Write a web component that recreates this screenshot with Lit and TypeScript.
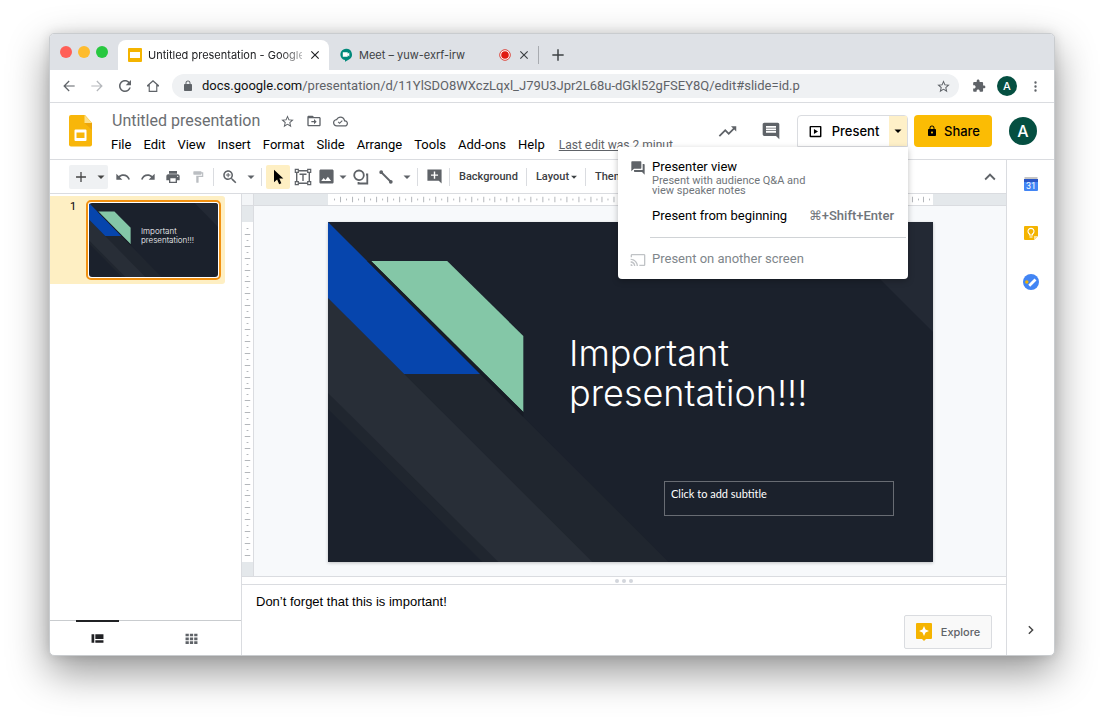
import { LitElement, html, css, svg, nothing } from "lit";
import { customElement, property } from "lit/decorators.js";

const PATHS: Record<string, string> = {
  undo: "M12.5 8c-2.65 0-5.05.99-6.9 2.6L2 7v9h9l-3.62-3.62c1.39-1.16 3.16-1.88 5.12-1.88 3.54 0 6.55 2.31 7.6 5.5l2.37-.78C21.08 11.03 17.15 8 12.5 8z",
  redo: "M18.4 10.6C16.55 8.99 14.15 8 11.5 8c-4.65 0-8.58 3.03-9.96 7.22L3.9 16c1.05-3.19 4.05-5.5 7.6-5.5 1.95 0 3.73.72 5.12 1.88L13 16h9V7l-3.6 3.6z",
  print: "M19 8H5c-1.66 0-3 1.34-3 3v6h4v4h12v-4h4v-6c0-1.66-1.34-3-3-3zm-3 11H8v-5h8v5zm3-7c-.55 0-1-.45-1-1s.45-1 1-1 1 .45 1 1-.45 1-1 1zm-1-9H6v4h12V3z",
  paint: "M18 4V3c0-.55-.45-1-1-1H5c-.55 0-1 .45-1 1v4c0 .55.45 1 1 1h12c.55 0 1-.45 1-1V6h1v4H9v11c0 .55.45 1 1 1h2c.55 0 1-.45 1-1v-9h8V4h-3z",
  zoom: "M15.5 14h-.79l-.28-.27C15.41 12.59 16 11.11 16 9.5 16 5.91 13.09 3 9.5 3S3 5.91 3 9.5 5.91 16 9.5 16c1.61 0 3.09-.59 4.23-1.57l.27.28v.79l5 4.99L20.49 19l-4.99-5zm-6 0C7.01 14 5 11.99 5 9.5S7.01 5 9.5 5 14 7.01 14 9.5 11.99 14 9.5 14zm3-4h-2.300v2.300H8.800v-2.300H6.500V8.800h2.300V6.500h1.400v2.300h2.300z",
  image: "M22 20V4c0-1.1-.9-2-2-2H4c-1.100 0-2 .9-2 2v16c0 1.100.9 2 2 2h16c1.100 0 2-.9 2-2zM8 14l2.500 3.010L14 12.500l4.500 6h-14z",
  comment: "M21.99 4c0-1.1-.89-2-1.99-2H4c-1.1 0-2 .9-2 2v12c0 1.1.9 2 2 2h14l4 4-.01-18zM18 14H6v-2h12v2zm0-3H6V9h12v2zm0-3H6V6h12v2z",
  addComment: "M22 2H2v16h16l4 4V2zM17 11h-4v4h-2v-4H7V9h4V5h2v4h4v2z",
  forum: "M21 6h-2v9H6v2c0 .55.45 1 1 1h11l4 4V7c0-.55-.45-1-1-1zm-4 6V3c0-.55-.45-1-1-1H3c-.55 0-1 .45-1 1v14l4-4h10c.55 0 1-.45 1-1z",
  cast: "M21 3H3c-1.1 0-2 .9-2 2v3h2V5h18v14h-7v2h7c1.1 0 2-.9 2-2V5c0-1.1-.9-2-2-2zM1 18v3h3c0-1.66-1.34-3-3-3zm0-4v2c2.76 0 5 2.24 5 5h2c0-3.87-3.13-7-7-7zm0-4v2c4.97 0 9 4.03 9 9h2c0-6.08-4.93-11-11-11z",
  trend: "M16 6l2.29 2.29-4.88 4.88-4-4L2 16.59 3.41 18l6-6 4 4 6.3-6.29L22 12V6z",
  lock: "M18 8h-1V6c0-2.76-2.24-5-5-5S7 3.24 7 6v2H6c-1.1 0-2 .9-2 2v10c0 1.1.9 2 2 2h12c1.1 0 2-.9 2-2V10c0-1.1-.9-2-2-2zm-6 9c-1.1 0-2-.9-2-2s.9-2 2-2 2 .9 2 2-.9 2-2 2zm3.1-9H8.9V6c0-1.71 1.39-3.1 3.1-3.1 1.71 0 3.1 1.39 3.1 3.1v2z",
  lockSolid: "M18 8h-1V6c0-2.76-2.24-5-5-5S7 3.24 7 6v2H6c-1.1 0-2 .9-2 2v10c0 1.1.9 2 2 2h12c1.1 0 2-.9 2-2V10c0-1.1-.9-2-2-2zm-2.900 0H8.900V6c0-1.710 1.390-3.100 3.100-3.100 1.710 0 3.100 1.390 3.100 3.100v2z",
  puzzle: "M20.5 11H19V7c0-1.1-.9-2-2-2h-4V3.5C13 2.12 11.88 1 10.5 1S8 2.12 8 3.5V5H4c-1.1 0-1.99.9-1.99 2v3.8H3.5c1.49 0 2.7 1.21 2.7 2.7s-1.21 2.7-2.7 2.7H2V20c0 1.1.9 2 2 2h3.8v-1.5c0-1.49 1.21-2.7 2.7-2.7 1.49 0 2.7 1.21 2.7 2.7V22H17c1.1 0 2-.9 2-2v-4h1.5c1.38 0 2.5-1.12 2.5-2.5S21.88 11 20.5 11z",
  star: "M22 9.24l-7.19-.62L12 2 9.19 8.63 2 9.24l5.46 4.73L5.82 21 12 17.27 18.18 21l-1.63-7.03L22 9.24zM12 15.4l-3.76 2.27 1-4.28-3.32-2.88 4.38-.38L12 6.1l1.71 4.04 4.38.38-3.32 2.88 1 4.28L12 15.4z",
  back: "M20.500 11.100H6.900l6-6L11.600 3.800 3.400 12l8.200 8.200 1.300-1.300-6-6h13.600z",
  forward: "M3.500 11.100h13.600l-6-6 1.300-1.300 8.200 8.200-8.200 8.200-1.300-1.300 6-6H3.500z",
  refresh: "M17.65 6.35C16.2 4.9 14.21 4 12 4c-4.42 0-7.99 3.58-7.99 8s3.57 8 7.99 8c3.73 0 6.84-2.55 7.73-6h-2.08c-.82 2.33-3.04 4-5.65 4-3.31 0-6-2.69-6-6s2.69-6 6-6c1.66 0 3.14.69 4.22 1.78L13 11h7V4l-2.35 2.35z",
  home: "M12 3 3 11v1.800h2.500V21h13v-8.200H21V11zm0 2.500 4.800 4.300v9.400H7.200V9.800z",
  cloud: "M19.35 10.04C18.67 6.59 15.64 4 12 4 9.11 4 6.6 5.64 5.35 8.04 2.34 8.36 0 10.91 0 14c0 3.31 2.69 6 6 6h13c2.76 0 5-2.24 5-5 0-2.64-2.05-4.78-4.65-4.96zM19 18H6c-2.21 0-4-1.79-4-4 0-2.05 1.53-3.76 3.56-3.97l1.07-.11.5-.95C8.08 7.14 9.94 6 12 6c2.62 0 4.88 1.86 5.39 4.43l.3 1.5 1.53.11c1.56.1 2.78 1.41 2.78 2.96 0 1.65-1.35 3-3 3zm-8.500-4.300-1.700-1.700-1.200 1.200 2.900 2.900 5-5-1.200-1.200z",
  folder: "M20 6h-8l-2-2H4c-1.100 0-2 .9-2 2v12c0 1.100.9 2 2 2h16c1.100 0 2-.9 2-2V8c0-1.100-.9-2-2-2zm0 12H4V8h16zM12 17l4-4-4-4v3H8v2h4z",
  close: "M19 6.410 17.590 5 12 10.590 6.410 5 5 6.410 10.590 12 5 17.590 6.410 19 12 13.410 17.590 19 19 17.590 13.410 12z",
  plus: "M20.500 13.100h-7.400v7.400h-2.200v-7.400H3.500v-2.200h7.400V3.500h2.200v7.400h7.400z",
  caret: "M5 9l7 7 7-7z",
  up: "M12 8l-6 6 1.410 1.410L12 10.830l4.590 4.580L18 14z",
  next: "M9.500 5.500 8 7l5 5-5 5 1.500 1.500L16 12z",
  dots: "M12 7.500a1.900 1.900 0 1 0 0-3.800 1.900 1.900 0 0 0 0 3.800zm0 6.400a1.900 1.900 0 1 0 0-3.800 1.900 1.900 0 0 0 0 3.800zm0 6.400a1.900 1.900 0 1 0 0-3.800 1.900 1.900 0 0 0 0 3.800z",
  cursor: "M6 1v19l4.700-4.300 3 7 3.300-1.400-3-6.900H20z",
  present: "M20 3H4c-1 0-1.500.5-1.500 1.500v15c0 1 .5 1.500 1.500 1.500h16c1 0 1.500-.5 1.500-1.500v-15C21.500 3.500 21 3 20 3zm-.8 15.700H4.800V5.300h14.400zM9.500 8v8l6.500-4z",
  filmstrip: "M1 4h5v16H1zM8 4h15v9H8zM8 15h15v5H8z",
  grid: "M1 3h6v5H1zM9 3h6v5H9zM17 3h6v5h-6zM1 10h6v5H1zM9 10h6v5H9zM17 10h6v5h-6zM1 17h6v5H1zM9 17h6v5H9zM17 17h6v5h-6z",
};

const icon = (name: string, size = 16) => html`<svg width=${size} height=${size} viewBox="0 0 24 24" fill="currentColor" aria-hidden="true"><path fill-rule="evenodd" d=${PATHS[name]}></path></svg>`;

const textBoxIcon = html`<svg width="18" height="18" viewBox="0 0 18 18" fill="none" stroke="currentColor" stroke-width="1.400" aria-hidden="true">
  <path d="M4.500 2.700h9M4.500 15.300h9M2.700 4.500v9M15.300 4.500v9M5.500 6.200h7M9 6.200v6.800"></path>
  <path stroke-width="1.200" d="M1.300 1.300h3v3h-3zM13.700 1.300h3v3h-3zM1.300 13.700h3v3h-3zM13.700 13.700h3v3h-3z"></path></svg>`;
const shapeIcon = html`<svg width="18" height="18" viewBox="0 0 18 18" fill="none" stroke="currentColor" stroke-width="1.800" aria-hidden="true">
  <circle cx="7" cy="7.300" r="4.800"></circle><path d="M14 6.500h1.300v9H6.500V14"></path></svg>`;
const lineIcon = html`<svg width="18" height="18" viewBox="0 0 18 18" stroke="currentColor" stroke-width="1.800" fill="currentColor" aria-hidden="true">
  <path d="M4.500 4.500l9 9"></path><circle cx="4.200" cy="4.200" r="1"></circle><circle cx="13.800" cy="13.800" r="1"></circle></svg>`;
const slidesTabIcon = html`<svg width="14" height="14" viewBox="0 0 14 14" aria-hidden="true"><rect width="14" height="14" rx="1" fill="#f4b400"></rect><rect x="2" y="4" width="10" height="6" fill="#fff"></rect></svg>`;
const meetTabIcon = html`<svg width="14" height="14" viewBox="0 0 14 14" aria-hidden="true"><path d="M7 .8a5.700 5.700 0 0 0-1 11.300v1.600l4-2.200A5.700 5.700 0 0 0 7 .8z" fill="#00897b"></path><path d="M3.800 4.300h4.900v1.500l1.600-1.200v3.800L8.700 7.300v1.500H3.800z" fill="#fff"></path></svg>`;
const recordIcon = html`<svg width="12" height="12" viewBox="0 0 12 12" aria-label="Recording"><circle cx="6" cy="6" r="5.300" fill="#fff" stroke="#d93025" stroke-width=".9"></circle><circle cx="6" cy="6" r="3.800" fill="#e01b12"></circle></svg>`;
const slidesLogo = html`<svg width="24" height="32" viewBox="0 0 24 32" aria-hidden="true"><path d="M2 0h14l7 8v21.500a2 2 0 0 1-2 2H2a2 2 0 0 1-2-2V2a2 2 0 0 1 2-2z" fill="#f8b60a"></path><path d="M15.500 0l7.500 8h-7.500z" fill="#fce08a"></path><path d="M15.500 8H23v7z" fill="#eda60a"></path><path fill="#fff" fill-rule="evenodd" d="M6.500 14.500h10a1 1 0 0 1 1 1v9.500a1 1 0 0 1-1 1h-10a1 1 0 0 1-1-1v-9.500a1 1 0 0 1 1-1zm1 3v5.500h8v-5.500z"></path></svg>`;
const calendarIcon = html`<svg width="16" height="16" viewBox="0 0 16 16" aria-hidden="true"><rect x="1.500" y="1" width="13" height="4" fill="#c5c5c5"></rect><rect x="1" y="3" width="14" height="12" rx="1" fill="#4285f4"></rect><path d="M1 3h14v3H1z" fill="#2a56c6"></path><text x="8" y="12.500" font-family="Roboto, sans-serif" font-size="9" text-anchor="middle" fill="#fff">31</text></svg>`;
const keepIcon = html`<svg width="16" height="16" viewBox="0 0 16 16" aria-hidden="true"><path d="M2 1h12a1 1 0 0 1 1 1v9l-4 4H2a1 1 0 0 1-1-1V2a1 1 0 0 1 1-1z" fill="#f4b400"></path><path d="M11 11h4l-4 4z" fill="#fde49b"></path><path d="M6.600 10V9a3 3 0 1 1 2.800 0v1zM6.500 12h3" fill="none" stroke="#fff" stroke-width="1.100"></path></svg>`;
const tasksIcon = html`<svg width="16" height="16" viewBox="0 0 16 16" aria-hidden="true"><circle cx="8" cy="8" r="8" fill="#4285f4"></circle><path d="M6.300 9.800l.9.9 5.300-5.300" fill="none" stroke="#fff" stroke-width="2.800"></path><circle cx="3.800" cy="8" r="1.700" fill="#f4b400"></circle></svg>`;
const exploreIcon = html`<svg width="16" height="18" viewBox="0 0 16 18" aria-hidden="true"><path d="M1 0h14a1 1 0 0 1 1 1v14a1 1 0 0 1-1 1h-5l-2 2-2-2H1a1 1 0 0 1-1-1V1a1 1 0 0 1 1-1z" fill="#f5b400"></path><path d="M8 3l1.500 3.500L13 8 9.500 9.500 8 13 6.500 9.500 3 8l3.500-1.500z" fill="#fff"></path></svg>`;

const slideArt = html`<svg class="art" viewBox="0 0 604 340" preserveAspectRatio="none" aria-hidden="true">
  <rect width="604" height="340" fill="#1b212c"></rect>
  <path d="M494 0h110v110z" fill="#232934"></path>
  <path d="M0 0l340 340H154L0 187z" fill="#20262f"></path>
  <path d="M0 76l264 264h-94L0 171z" fill="#282e37"></path>
  <path d="M0 0l152 152H76L0 76z" fill="#0645ad"></path>
  <path d="M43 39h76l76 75v76z" fill="#84c7a7"></path>
  <path d="M39 39l156 156v-5L43 39z" fill="#171c25"></path>
</svg>`;

@customElement("tick-ruler")
export class TickRuler extends LitElement {
  @property({ type: Number }) length = 604;
  @property({ type: Boolean }) vertical = false;
  static styles = css`
    :host { display: block; background: #fff; overflow: hidden; }
    .ticks { display: block; width: 100%; height: 100%; }
    .ticks.down { height: 0; min-height: 100%; }
  `;
  render() {
    const step = 604 / 101.600;
    const count = Math.floor((this.length - 2) / step);
    const marks = Array.from({ length: count }, (_, i) => {
      const at = Math.round((i + 1) * step);
      const long = i % 2 === 1;
      const start = long ? 3 : 5;
      const size = long ? 6 : 2;
      return this.vertical
        ? svg`<rect x=${start} y=${at} width=${size} height="1"></rect>`
        : svg`<rect x=${at} y=${start} width="1" height=${size}></rect>`;
    });
    const box = this.vertical ? `0 0 12 ${this.length}` : `0 0 ${this.length} 12`;
    return html`<svg class=${this.vertical ? "ticks down" : "ticks"} viewBox=${box} preserveAspectRatio="none" fill="#b4b7bb" aria-hidden="true">${marks}</svg>`;
  }
}

@customElement("present-menu")
export class PresentMenu extends LitElement {
  static styles = css`
    :host { display: block; background: #fff; border-radius: 0 0 4px 4px; box-shadow: 0 2px 6px rgba(0, 0, 0, 0.25); padding: 13px 2px 13px 12px; font-family: Roboto, sans-serif; font-weight: 400; }
    button { all: unset; box-sizing: border-box; display: grid; grid-template-columns: 22px 1fr auto; width: 100%; padding-right: 12px; font-size: 13px; line-height: 14px; color: #000; cursor: pointer; }
    .label { grid-column: 2; }
    .hint { grid-column: 2; width: 160px; font-size: 11px; line-height: 10px; color: #70757a; margin-top: 2px; }
    .icon { color: #5f6368; height: 14px; grid-column: 1; }
    .keys { color: #70757a; font-weight: 500; }
    .begin { margin-top: 13px; }
    .off { color: #80868b; }
    .off .icon { color: #c0c3c6; }
    .rule { border: 0; border-top: 1px solid #d0d3d6; margin: 14px 0 14px 20px; }
    svg { display: block; }
  `;
  render() {
    return html`
      <button role="menuitem"><span class="icon">${icon("forum", 16)}</span><span class="label">Presenter view</span><span class="hint">Present with audience Q&amp;A and view speaker notes</span></button>
      <button role="menuitem" class="begin"><span class="label">Present from beginning</span><span class="keys">⌘+Shift+Enter</span></button>
      <hr class="rule" />
      <button role="menuitem" class="off" disabled><span class="icon">${icon("cast", 16)}</span><span class="label">Present on another screen</span></button>
    `;
  }
}

@customElement("app-root")
export class AppRoot extends LitElement {
  static styles = css`
    :host { display: flex; box-sizing: border-box; min-height: 100vh; padding: 33px 49px 64px; background: #fff; font-family: Roboto, sans-serif; color: #202124; }
    * { box-sizing: border-box; }
    button { font: inherit; color: inherit; background: none; border: 0; padding: 0; margin: 0; display: flex; align-items: center; justify-content: center; cursor: pointer; }
    svg { display: block; flex: none; }
    a { color: inherit; }
    .window { flex: 1; min-width: 0; display: flex; flex-direction: column; background: #fff; border: 1px solid #c9cccf; border-radius: 5px; box-shadow: 0 16px 40px rgba(0, 0, 0, 0.42), 0 0 12px rgba(0, 0, 0, 0.12); }

    .tabs { display: flex; align-items: flex-end; height: 36px; background: #dee1e6; border-radius: 4px 4px 0 0; font: 11px/14px Inter, sans-serif; }
    .lights { display: flex; gap: 6px; padding: 0 10px 12px 10px; }
    .light { width: 12px; height: 12px; border-radius: 50%; }
    .red { background: #ff5f57; }
    .yellow { background: #febc2e; }
    .green { background: #28c840; }
    .tab { display: flex; align-items: center; height: 30px; padding: 0 7px 0 10px; gap: 6px; }
    .tab.active { width: 211px; background: #fff; border-radius: 8px 8px 0 0; }
    .tab.other { width: 209px; color: #3c4043; }
    .name { flex: 1; min-width: 0; white-space: nowrap; }
    .active .name { mask-image: linear-gradient(90deg, #000 85%, rgba(0, 0, 0, 0.35)); }
    .tabs .rule { width: 1px; height: 18px; background: #a8abb0; margin-bottom: 6px; }
    .new-tab { height: 30px; padding: 0 11px; color: #3c4043; }

    .nav { display: flex; align-items: center; height: 33px; padding: 0 5px; border-bottom: 1px solid #dadce0; color: #5f6368; }
    .nav > button { width: 28px; height: 24px; }
    .nav .dim { color: #b5b8bc; }
    .address { flex: 1; min-width: 0; display: flex; align-items: center; gap: 8px; height: 24px; border-radius: 12px; background: #eff1f3; padding: 0 8px 0 10px; margin: 0 6px 0 5px; font-size: 13px; line-height: 18px; }
    .url { flex: 1; min-width: 0; white-space: nowrap; overflow: hidden; }
    .url b { font-weight: 400; color: #111; }
    .face { display: flex; align-items: center; justify-content: center; border-radius: 50%; background: #054f41; color: #fff; font: 500 11px/1 Inter, sans-serif; width: 20px; height: 20px; }
    .face.big { width: 28px; height: 28px; font-size: 16px; }

    .header { display: flex; height: 57px; border-bottom: 1px solid #dadce0; padding: 0 17px 0 19px; }
    .logo { padding-top: 12px; width: 42px; }
    .doc { flex: 1; min-width: 0; display: flex; flex-direction: column; }
    .title-row { display: flex; align-items: center; gap: 11px; height: 24px; margin-top: 6px; color: #5f6368; }
    .doc-title { margin: 0 9px 0 1px; font-size: 16px; line-height: 24px; font-weight: 400; color: #6b6e72; }
    .menus { display: flex; gap: 12px; align-items: center; height: 24px; color: #000; font-size: 13px; line-height: 16px; white-space: nowrap; }
    .edited { margin-left: 2px; color: #5f6368; font-size: 12px; }
    .actions { display: flex; align-items: flex-start; padding-top: 12px; }
    .actions .plain { width: 44px; height: 32px; color: #5f6368; }
    .split { position: relative; display: flex; height: 32px; width: 111px; margin: 0 6px 0 4px; border: 1px solid #dadce0; border-radius: 4px 4px 0 0; font: 500 13px/16px Inter, sans-serif; color: #000; }
    .go { flex: 1; gap: 9px; }
    .more { width: 18px; background: #fef0c8; }
    .split present-menu { position: absolute; top: 31px; right: -1px; width: 290px; z-index: 2; }
    .share { width: 78px; height: 32px; gap: 6px; border-radius: 4px; background: #fbbc04; font: 500 13px/16px Inter, sans-serif; color: #000; margin-right: 17px; }
    .actions .face { margin-top: 2px; }

    .body { flex: 1; min-height: 0; display: flex; }
    .work { flex: 1; min-width: 0; display: flex; flex-direction: column; }
    .toolbar { display: flex; align-items: center; gap: 1px; height: 34px; padding: 0 4px 0 19px; border-bottom: 1px solid #dadce0; color: #5f6368; font-size: 11px; font-weight: 500; }
    .toolbar button { width: 24px; height: 24px; flex: none; border-radius: 2px; }
    .toolbar .arrow { width: 15px; }
    .toolbar .tight { width: 20px; }
    .toolbar .tight + .arrow { width: 11px; }
    .new { display: flex; background: #eff1f3; border-radius: 2px; margin-right: 2px; color: #444; }
    .toolbar .on { background: #feefc3; color: #000; }
    .toolbar .disabled { color: #bbbec2; }
    .toolbar .word { width: auto; padding: 0 5px; color: #3c4043; }
    .word svg { margin-right: -2px; }
    .sep { width: 1px; height: 18px; background: #dadce0; margin: 0 3px 0 2px; }
    .fill { flex: 1; }

    .panes { flex: 1; min-height: 0; display: grid; grid-template-columns: 192px minmax(0, 1fr); }
    .film { display: flex; flex-direction: column; border-right: 1px solid #dadce0; }
    .slides { flex: 1; padding: 2px 16px 0 0; margin: 0; list-style: none; }
    .slot { display: flex; justify-content: space-between; height: 88px; background: #feefc3; border-radius: 0 3px 3px 0; padding: 4px 4px 4px 20px; font-size: 11px; line-height: 14px; color: #000; }
    .thumb { display: grid; width: 135px; height: 80px; border: 2px solid #f29111; border-radius: 5px; background: #fff; padding: 1px; }
    .thumb .art, .thumb-text { grid-area: 1 / 1; min-height: 0; width: 100%; height: 100%; border-radius: 3px; }
    .thumb-text { color: #fff; font: 300 8px/9px Inter, sans-serif; padding: 24px 0 0 52px; }
    .views { display: grid; grid-template-columns: 1fr 1fr; height: 35px; border-top: 1px solid #c9cccf; color: #5f6368; padding-right: 2px; }
    .views .current { color: #202124; }
    .views button { position: relative; }
    .views .current::before { content: ""; position: absolute; top: -1px; width: 43px; height: 2px; background: #202124; }

    .stage { display: flex; flex-direction: column; min-width: 0; }
    .canvas { flex: 1; min-height: 0; display: grid; grid-template: 12px 16px minmax(0, 1fr) 14px / 12px 74px minmax(0, 1fr) 73px; background: #f7f9fb; }
    .corner { background: #f3f5f7; border-right: 1px solid #dadce0; border-bottom: 1px solid #dadce0; }
    .gap { background: #e4e8eb; }
    .gap, .h-ruler { border-bottom: 1px solid #dadce0; }
    .gap.side, .v-ruler { border-right: 1px solid #dadce0; border-bottom: 0; }
    .v-ruler { grid-area: 3 / 1; min-height: 0; }
    .gap.foot { grid-area: 4 / 1; }
    .slide { grid-area: 3 / 3; display: grid; min-height: 0; box-shadow: 0 1px 3px rgba(60, 64, 67, 0.3); color: #fff; }
    .slide > .art { grid-area: 1 / 1; width: 100%; height: 0; min-height: 100%; }
    .copy { grid-area: 1 / 1; display: flex; flex-direction: column; justify-content: space-between; padding: 111px 39px 46px 241px; }
    .headline { margin: 0; font: 300 36px/40px Inter, sans-serif; }
    .subtitle { align-self: flex-end; width: 230px; height: 35px; border: 1px solid #686c73; padding: 5px 6px; font: 11px/14px Lato, sans-serif; }
    .handle { display: flex; align-items: center; justify-content: center; gap: 3px; height: 9px; border: solid #dadce0; border-width: 1px 0; }
    .handle i { width: 4px; height: 4px; border-radius: 50%; background: #d3d6dc; }
    .notes { display: flex; justify-content: space-between; height: 70px; padding: 9px 14px 6px 14px; }
    .notes p { margin: 0; font: 13px/16px "Liberation Sans", sans-serif; color: #000; }
    .explore { align-self: flex-end; width: 88px; height: 34px; gap: 9px; border: 1px solid #dadce0; border-radius: 2px; background: #f9f9f9; font: 500 11px/16px Inter, sans-serif; color: #5f6368; }

    .rail { width: 48px; display: flex; flex-direction: column; align-items: center; gap: 25px; border-left: 1px solid #dadce0; padding: 12px 0 13px; color: #444; }
    .rail button { width: 24px; height: 24px; }
    .rail .last { margin-top: auto; }
  `;

  private tool(name: string, label: string, size = 16, cls = "") {
    return html`<button class=${cls || nothing} aria-label=${label}>${icon(name, size)}</button>`;
  }
  private arrow(label: string) {
    return this.tool("caret", label, 12, "arrow");
  }

  render() {
    const menus = ["File", "Edit", "View", "Insert", "Format", "Slide", "Arrange", "Tools", "Add-ons", "Help"];
    const sep = html`<span class="sep"></span>`;
    return html`
      <div class="window">
        <div class="tabs">
          <div class="lights"><span class="light red"></span><span class="light yellow"></span><span class="light green"></span></div>
          <div class="tab active">${slidesTabIcon}<span class="name">Untitled presentation - Google</span><button aria-label="Close tab">${icon("close", 14)}</button></div>
          <div class="tab other">${meetTabIcon}<span class="name">Meet – yuw-exrf-irw</span>${recordIcon}<button aria-label="Close tab">${icon("close", 14)}</button></div>
          <span class="rule"></span>
          <button class="new-tab" aria-label="New tab">${icon("plus", 16)}</button>
        </div>
        <nav class="nav">
          ${this.tool("back", "Back", 16)}
          ${this.tool("forward", "Forward", 16, "dim")}
          ${this.tool("refresh", "Reload", 18)}
          ${this.tool("home", "Home", 16)}
          <div class="address">${icon("lockSolid", 12)}<span class="url"><b>docs.google.com</b>/presentation/d/11YlSDO8WXczLqxl_J79U3Jpr2L68u-dGkl52gFSEY8Q/edit#slide=id.p</span><button aria-label="Bookmark">${icon("star", 15)}</button></div>
          ${this.tool("puzzle", "Extensions", 14)}
          <button aria-label="Profile"><span class="face">A</span></button>
          ${this.tool("dots", "More", 15)}
        </nav>
        <header class="header">
          <div class="logo">${slidesLogo}</div>
          <div class="doc">
            <div class="title-row"><h1 class="doc-title">Untitled presentation</h1><button aria-label="Star">${icon("star", 15)}</button><button aria-label="Move">${icon("folder", 16)}</button><button aria-label="Saved">${icon("cloud", 15)}</button></div>
            <div class="menus">${menus.map((m) => html`<button>${m}</button>`)}<a class="edited" href="#">Last edit was 2 minut</a></div>
          </div>
          <div class="actions">
            <button class="plain" aria-label="Activity">${icon("trend", 21)}</button>
            <button class="plain" aria-label="Comments">${icon("comment", 20)}</button>
            <div class="split"><button class="go">${icon("present", 15)}Present</button><button class="more" aria-label="Present options">${icon("caret", 12)}</button><present-menu role="menu"></present-menu></div>
            <button class="share">${icon("lock", 12)}Share</button>
            <span class="face big">A</span>
          </div>
        </header>
        <div class="body">
          <div class="work">
            <div class="toolbar">
              <span class="new">${this.tool("plus", "New slide", 14)}${this.arrow("New slide options")}</span>
              ${this.tool("undo", "Undo")}${this.tool("redo", "Redo")}${this.tool("print", "Print")}${this.tool("paint", "Paint format", 14, "disabled")}
              ${sep}${this.tool("zoom", "Zoom", 18)}${this.arrow("Zoom options")}
              ${sep}${this.tool("cursor", "Select", 16, "on")}
              <button aria-label="Text box">${textBoxIcon}</button>
              ${this.tool("image", "Image", 17, "tight")}${this.arrow("Image options")}
              <button aria-label="Shape">${shapeIcon}</button><button aria-label="Line">${lineIcon}</button>${this.arrow("Line options")}
              ${sep}${this.tool("addComment", "Add comment", 17)}
              ${sep}<button class="word">Background</button>
              ${sep}<button class="word">Layout${icon("caret", 10)}</button>
              ${sep}<button class="word">Theme</button>
              <span class="fill"></span>${this.tool("up", "Hide menus", 22)}
            </div>
            <div class="panes">
              <aside class="film">
                <ol class="slides"><li class="slot"><span>1</span><div class="thumb">${slideArt}<div class="thumb-text">Important presentation!!!</div></div></li></ol>
                <div class="views"><button class="current" aria-label="Filmstrip view">${icon("filmstrip", 13)}</button><button aria-label="Grid view">${icon("grid", 13)}</button></div>
              </aside>
              <main class="stage">
                <div class="canvas">
                  <span class="corner"></span><span class="gap"></span><tick-ruler class="h-ruler"></tick-ruler><span class="gap"></span>
                  <span class="gap side"></span>
                  <tick-ruler class="v-ruler" vertical .length=${340}></tick-ruler>
                  <span class="gap side foot"></span>
                  <section class="slide">${slideArt}<div class="copy"><h2 class="headline">Important<br />presentation!!!</h2><div class="subtitle">Click to add subtitle</div></div></section>
                </div>
                <div class="handle"><i></i><i></i><i></i></div>
                <div class="notes"><p>Don’t forget that this is important!</p><button class="explore">${exploreIcon}Explore</button></div>
              </main>
            </div>
          </div>
          <aside class="rail">
            <button aria-label="Calendar">${calendarIcon}</button><button aria-label="Keep">${keepIcon}</button><button aria-label="Tasks">${tasksIcon}</button>
            <button class="last" aria-label="Hide side panel">${icon("next", 16)}</button>
          </aside>
        </div>
      </div>
    `;
  }
}
